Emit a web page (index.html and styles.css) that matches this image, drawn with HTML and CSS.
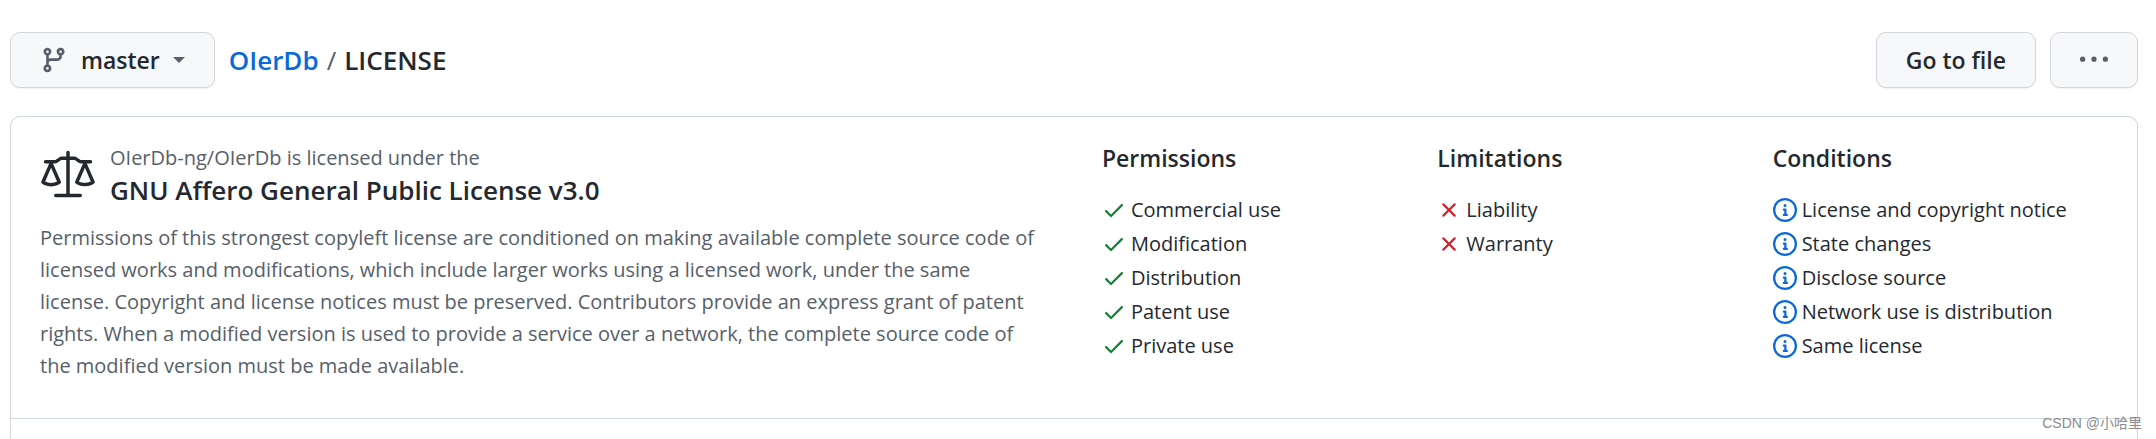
FILE: index.html
```html
<!DOCTYPE html>
<html lang="en">
<head>
<meta charset="utf-8">
<title>OIerDb/LICENSE at master</title>
<link rel="stylesheet" href="styles.css">
</head>
<body>
<svg class="sprite" aria-hidden="true">
  <symbol id="check" viewBox="0 0 16 16"><path d="M13.78 4.22a.75.75 0 0 1 0 1.06l-7.25 7.25a.75.75 0 0 1-1.06 0L2.22 9.28a.75.75 0 0 1 1.06-1.06L6 10.94l6.72-6.72a.75.75 0 0 1 1.06 0Z"/></symbol>
  <symbol id="cross" viewBox="0 0 16 16"><path d="M3.72 3.72a.75.75 0 0 1 1.06 0L8 6.94l3.22-3.22a.75.75 0 1 1 1.06 1.06L9.06 8l3.22 3.22a.75.75 0 1 1-1.06 1.06L8 9.06l-3.22 3.22a.75.75 0 0 1-1.06-1.06L6.94 8 3.72 4.78a.75.75 0 0 1 0-1.06Z"/></symbol>
  <symbol id="info" viewBox="0 0 16 16"><path d="M0 8a8 8 0 1 1 16 0A8 8 0 0 1 0 8Zm8-6.5a6.5 6.5 0 1 0 0 13 6.5 6.5 0 0 0 0-13ZM6.5 7.75A.75.75 0 0 1 7.25 7h1a.75.75 0 0 1 .75.75v2.75h.25a.75.75 0 0 1 0 1.5h-2a.75.75 0 0 1 0-1.5h.25v-2h-.25a.75.75 0 0 1-.75-.75ZM8 6a1 1 0 1 1 0-2 1 1 0 0 1 0 2Z"/></symbol>
</svg>
<header class="toolbar">
  <button class="btn branch" type="button">
    <svg class="icon" viewBox="0 0 16 16" aria-hidden="true"><path d="M11.75 2.5a.75.75 0 1 0 0 1.5.75.75 0 0 0 0-1.5Zm-2.25.75a2.25 2.25 0 1 1 3 2.122V6A2.5 2.5 0 0 1 10 8.5H6a1 1 0 0 0-1 1v1.128a2.251 2.251 0 1 1-1.5 0V5.372a2.25 2.25 0 1 1 1.5 0v1.836A2.493 2.493 0 0 1 6 7h4a1 1 0 0 0 1-1v-.628A2.25 2.25 0 0 1 9.5 3.25ZM4.25 12a.75.75 0 1 0 0 1.5.75.75 0 0 0 0-1.5ZM3.5 3.25a.75.75 0 1 0 1.5 0 .75.75 0 0 0-1.5 0Z"/></svg>
    <span>master</span>
    <span class="caret"></span>
  </button>
  <nav class="crumbs" aria-label="Breadcrumb"><a href="#">OIerDb</a><span class="slash">/</span><span>LICENSE</span></nav>
  <div class="actions">
    <button class="btn" type="button">Go to file</button>
    <button class="btn more" type="button" aria-label="More options"><svg class="icon" viewBox="0 0 16 16" aria-hidden="true"><path d="M8 9a1.5 1.5 0 1 0 0-3 1.5 1.5 0 0 0 0 3ZM1.5 9a1.5 1.5 0 1 0 0-3 1.5 1.5 0 0 0 0 3Zm13 0a1.5 1.5 0 1 0 0-3 1.5 1.5 0 0 0 0 3Z"/></svg></button>
  </div>
</header>
<main class="panel">
  <section class="license">
    <div class="summary">
      <div class="title">
        <svg class="law" viewBox="0 0 24 24" aria-hidden="true"><path d="M12.75 2.75V4.5h1.975c.351 0 .694.106.984.303l1.697 1.154c.041.028.09.043.14.043h4.102a.75.75 0 0 1 0 1.5H20.07l3.366 7.68a.749.749 0 0 1-.23.896c-.1.074-.203.143-.31.206a6.296 6.296 0 0 1-.79.399 7.349 7.349 0 0 1-2.856.569 7.343 7.343 0 0 1-2.855-.568 6.205 6.205 0 0 1-.79-.4 3.205 3.205 0 0 1-.307-.202l-.005-.004a.749.749 0 0 1-.23-.896l3.368-7.68h-.886c-.351 0-.694-.106-.984-.303l-1.697-1.154a.246.246 0 0 0-.14-.043H12.75v14.5h4.487a.75.75 0 0 1 0 1.5H6.763a.75.75 0 0 1 0-1.5h4.487V6H9.275a.249.249 0 0 0-.14.043L7.439 7.197c-.29.197-.633.303-.984.303h-.886l3.368 7.68a.75.75 0 0 1-.209.878c-.08.065-.16.126-.31.223a6.077 6.077 0 0 1-.792.433 6.924 6.924 0 0 1-2.876.62 6.913 6.913 0 0 1-2.876-.62 6.077 6.077 0 0 1-.792-.433 3.483 3.483 0 0 1-.309-.221.762.762 0 0 1-.21-.88L3.93 7.5H2.353a.75.75 0 0 1 0-1.5h4.102c.05 0 .099-.015.141-.043l1.695-1.154c.29-.198.634-.303.985-.303h1.974V2.75a.75.75 0 0 1 1.5 0ZM2.193 15.198a5.414 5.414 0 0 0 2.557.635 5.414 5.414 0 0 0 2.557-.635L4.75 9.368Zm14.51-.024c.082.04.174.083.275.126.53.223 1.305.45 2.272.45a5.847 5.847 0 0 0 2.547-.576L19.25 9.367Z"/></svg>
        <div>
          <p class="under">OIerDb-ng/OIerDb is licensed under the</p>
          <h1>GNU Affero General Public License v3.0</h1>
        </div>
      </div>
      <p class="about">Permissions of this strongest copyleft license are conditioned on making available complete source code of licensed works and modifications, which include larger works using a licensed work, under the same license. Copyright and license notices must be preserved. Contributors provide an express grant of patent rights. When a modified version is used to provide a service over a network, the complete source code of the modified version must be made available.</p>
    </div>
    <div class="rules permit">
      <h2>Permissions</h2>
      <ul>
        <li><svg class="icon"><use href="#check"/></svg>Commercial use</li>
        <li><svg class="icon"><use href="#check"/></svg>Modification</li>
        <li><svg class="icon"><use href="#check"/></svg>Distribution</li>
        <li><svg class="icon"><use href="#check"/></svg>Patent use</li>
        <li><svg class="icon"><use href="#check"/></svg>Private use</li>
      </ul>
    </div>
    <div class="rules limit">
      <h2>Limitations</h2>
      <ul>
        <li><svg class="icon"><use href="#cross"/></svg>Liability</li>
        <li><svg class="icon"><use href="#cross"/></svg>Warranty</li>
      </ul>
    </div>
    <div class="rules require">
      <h2>Conditions</h2>
      <ul>
        <li><svg class="icon"><use href="#info"/></svg>License and copyright notice</li>
        <li><svg class="icon"><use href="#info"/></svg>State changes</li>
        <li><svg class="icon"><use href="#info"/></svg>Disclose source</li>
        <li><svg class="icon"><use href="#info"/></svg>Network use is distribution</li>
        <li><svg class="icon"><use href="#info"/></svg>Same license</li>
      </ul>
    </div>
  </section>
</main>
<div class="watermark">CSDN @小哈里</div>
</body>
</html>
```
FILE: styles.css
```css
* { box-sizing: border-box; }
body {
  margin: 0;
  min-height: 100vh;
  padding: 32px 18px 0 10px;
  display: flex;
  flex-direction: column;
  background: #fff;
  color: #24292f;
  font: 20px/32px "Open Sans", "Noto Sans", sans-serif;
}
h1, h2, p, ul { margin: 0; padding: 0; }
ul { list-style: none; }
.sprite { display: none; }
.icon { width: 24px; height: 24px; flex: none; fill: currentColor; }

.toolbar { display: flex; align-items: center; margin-bottom: 28px; }
.btn {
  display: flex;
  align-items: center;
  height: 56px;
  padding: 0 29px;
  border: 1px solid #d3d7db;
  border-radius: 10px;
  background: #f6f8fa;
  box-shadow: 0 1px 1px rgba(27, 31, 36, 0.06);
  color: #24292f;
  font: 600 23px/32px "Open Sans", "Noto Sans", sans-serif;
}
.branch { gap: 13px; }
.btn .icon { width: 28px; height: 28px; fill: #57606a; }
.caret { border: 6px solid transparent; border-top-color: #57606a; border-bottom: 0; }
.crumbs { display: flex; gap: 8px; margin-left: 14px; font-size: 26px; font-weight: 600; }
.crumbs a { color: #0969da; text-decoration: none; }
.slash { color: #57606a; font-weight: 400; }
.actions { display: flex; gap: 14px; margin-left: auto; }

.panel { flex: 1; border: 1px solid #d0d7de; border-bottom: 0; border-radius: 10px 10px 0 0; }
.license {
  display: grid;
  grid-template-columns: 19fr repeat(3, 6fr);
  padding: 25px 29px 36px;
  border-bottom: 1px solid #d0d7de;
}
.summary { padding-right: 62px; }
.title { display: flex; align-items: center; gap: 14px; margin-bottom: 16px; }
.law { width: 56px; height: 56px; flex: none; fill: currentColor; }
.under, .about { color: #57606a; }
h1 { font-size: 26px; line-height: 32px; font-weight: 600; }
h2 { font-size: 23px; line-height: 32px; font-weight: 600; margin-bottom: 19px; }
li { display: flex; align-items: center; gap: 5px; line-height: 34px; white-space: nowrap; }
.permit .icon { color: #1a7f37; }
.limit .icon { color: #cf222e; }
.require .icon { color: #0969da; }

.watermark {
  position: absolute;
  right: 14px;
  bottom: 6px;
  color: #8c8c8c;
  font: 14px/20px "Liberation Sans", "Noto Sans CJK SC", sans-serif;
}
```
